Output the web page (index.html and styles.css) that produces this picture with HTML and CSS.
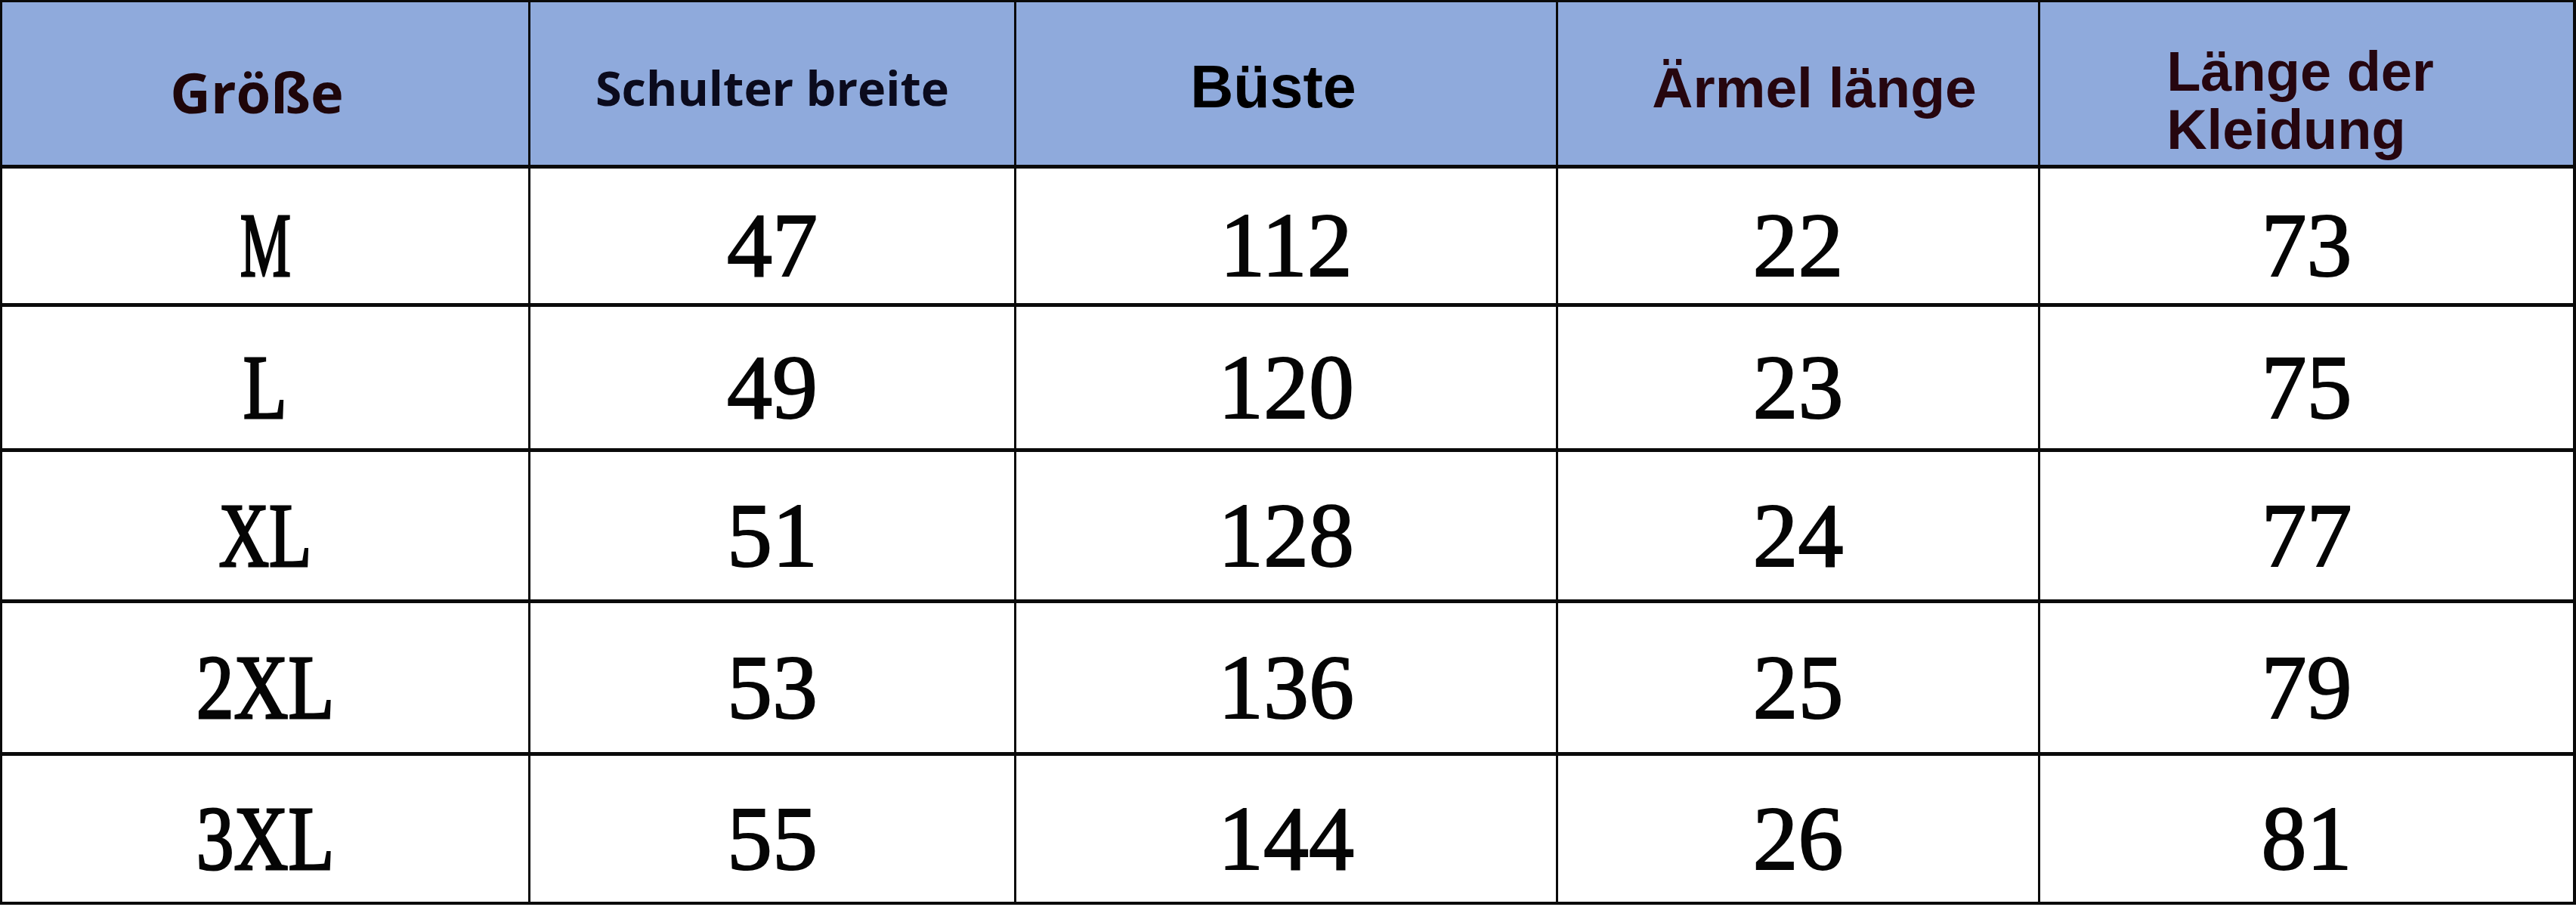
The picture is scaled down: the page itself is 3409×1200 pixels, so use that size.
FILE: index.html
```html
<!DOCTYPE html>
<html lang="de">
<head>
<meta charset="utf-8">
<title>Größentabelle</title>
<link rel="stylesheet" href="styles.css">
</head>
<body>
<div class="sheet">
  <div class="head h-size">Größe</div>
  <div class="head h-shoulder">Schulter breite</div>
  <div class="head h-bust">Büste</div>
  <div class="head h-sleeve">Ärmel länge</div>
  <div class="head h-length"><span class="two-line"><span class="ln">Länge der</span><span class="ln">Kleidung</span></span></div>

  <div class="cell"><span class="sz sz-m">M</span></div>
  <div class="cell">47</div>
  <div class="cell">112</div>
  <div class="cell">22</div>
  <div class="cell">73</div>

  <div class="cell"><span class="sz sz-l">L</span></div>
  <div class="cell">49</div>
  <div class="cell">120</div>
  <div class="cell">23</div>
  <div class="cell">75</div>

  <div class="cell"><span class="sz sz-xl">XL</span></div>
  <div class="cell">51</div>
  <div class="cell">128</div>
  <div class="cell">24</div>
  <div class="cell">77</div>

  <div class="cell"><span class="sz sz-nxl">2XL</span></div>
  <div class="cell">53</div>
  <div class="cell">136</div>
  <div class="cell">25</div>
  <div class="cell">79</div>

  <div class="cell"><span class="sz sz-nxl">3XL</span></div>
  <div class="cell">55</div>
  <div class="cell">144</div>
  <div class="cell">26</div>
  <div class="cell">81</div>
</div>
</body>
</html>
```
FILE: styles.css
```css
html, body {
  margin: 0;
  padding: 0;
  background: #ffffff;
}

.sheet {
  display: grid;
  grid-template-columns: 696px 640px 714px 635px 705px;
  grid-template-rows: 215px 178px 187px 195px 197px 193px;
  column-gap: 3px;
  row-gap: 5px;
  padding: 3px 4px 4px 3px;
  width: 3409px;
  box-sizing: border-box;
  background: #0a0a0a;
}

.head {
  background: #8faadc;
  display: flex;
  align-items: center;
  justify-content: center;
  font-family: "Open Sans", "Noto Sans", sans-serif;
  font-weight: 700;
  color: #1e060a;
  box-sizing: border-box;
  white-space: nowrap;
}

.h-size {
  font-size: 74px;
  padding: 21px 22px 0 0;
}

.h-shoulder {
  font-size: 63px;
  color: #0b0b1d;
  padding-top: 9px;
}

.h-bust {
  font-family: "Liberation Sans", Arial, sans-serif;
  font-size: 79px;
  color: #000000;
  padding: 9px 34px 0 0;
}

.h-sleeve {
  font-family: "Liberation Sans", Arial, sans-serif;
  font-size: 75px;
  color: #26060f;
  padding: 11px 0 0 43px;
}

.h-length {
  font-family: "Liberation Sans", Arial, sans-serif;
  font-size: 74px;
  color: #26060f;
  padding: 45px 17px 0 0;
}

.two-line {
  display: flex;
  flex-direction: column;
  align-items: flex-start;
}

.ln {
  display: block;
  line-height: 77px;
  height: 77px;
}

.cell {
  background: #ffffff;
  display: flex;
  align-items: center;
  justify-content: center;
  padding-top: 26px;
  box-sizing: border-box;
  font-family: "Liberation Serif", "Times New Roman", serif;
  font-size: 120px;
  color: #050505;
  -webkit-text-stroke: 2px #050505;
}

.sz {
  display: inline-block;
  transform-origin: center;
  -webkit-text-stroke: 3px #050505;
}

.sz-m { transform: scaleX(0.63); }
.sz-l { transform: scaleX(0.79); }
.sz-xl { transform: scaleX(0.77); }
.sz-nxl { transform: scaleX(0.83); }
```
